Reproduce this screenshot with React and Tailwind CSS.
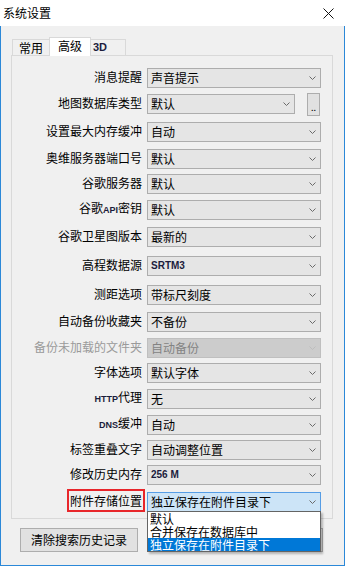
import React from 'react'

const Latin = ({ children }) => (
  <span className="font-['Liberation_Sans',sans-serif] text-[9px] font-bold text-[#1c1c3c]">{children}</span>
)

const rows = [
  { label: '消息提醒', value: '声音提示', gap: 'mt-0' },
  { label: '地图数据库类型', value: '默认', gap: 'mt-[6px]', browse: true },
  { label: '设置最大内存缓冲', value: '自动', gap: 'mt-[8px]' },
  { label: '奥维服务器端口号', value: '默认', gap: 'mt-[7px]' },
  { label: '谷歌服务器', value: '默认', gap: 'mt-[5px]' },
  { label: <>谷歌<Latin>API</Latin>密钥</>, value: '默认', gap: 'mt-[6px]' },
  { label: '谷歌卫星图版本', value: '最新的', gap: 'mt-[7px]' },
  { label: '高程数据源', value: 'SRTM3', latin: true, gap: 'mt-[9px]' },
  { label: '测距选项', value: '带标尺刻度', gap: 'mt-[9px]' },
  { label: '自动备份收藏夹', value: '不备份', gap: 'mt-[7px]' },
  { label: '备份未加载的文件夹', value: '自动备份', disabled: true, gap: 'mt-[6px]' },
  { label: '字体选项', value: '默认字体', gap: 'mt-[5px]' },
  { label: <><Latin>HTTP</Latin>代理</>, value: '无', gap: 'mt-[6px]' },
  { label: <><Latin>DNS</Latin>缓冲</>, value: '自动', gap: 'mt-[6px]' },
  { label: '标签重叠文字', value: '自动调整位置', gap: 'mt-[5px]' },
  { label: '修改历史内存', value: '256 M', latin: true, gap: 'mt-[5px]' },
  { label: '附件存储位置', value: '独立保存在附件目录下', focus: true, gap: 'mt-[7px]' },
  { label: '网址连接选项', value: '默认', gap: 'mt-[3px]' },
]

function Chevron({ color }) {
  return (
    <svg width="7" height="4" viewBox="0 0 7 4" className="shrink-0">
      <polyline points="0.5,0.5 3.5,3.5 6.5,0.5" fill="none" stroke={color} strokeWidth="1" />
    </svg>
  )
}

function Select({ row }) {
  let box = 'border-[#adadad] bg-[#e5e5e5] text-black'
  if (row.disabled) box = 'border-[#bfbfbf] bg-[#cccccc] text-[#838383]'
  if (row.focus) box = 'border-[#569de5] bg-[#cce4f7] text-black'
  const width = row.browse ? 'w-[148px]' : 'w-[174px]'
  return (
    <div className={`h-[20px] ${width} border ${box} flex items-center pl-[3px] pr-[4px]`}>
      <span className={row.latin
        ? "flex-1 font-['Liberation_Sans',sans-serif] text-[10px] font-bold text-[#1c1c3c] leading-[14px]"
        : 'flex-1 text-[12px] leading-[14px]'}>
        {row.value}
      </span>
      <Chevron color={row.disabled ? '#bdbdbd' : '#6a6a6a'} />
    </div>
  )
}

export default function App() {
  return (
    <div className="w-[345px] h-[566px] bg-white flex flex-col overflow-hidden relative font-['Noto_Sans_CJK_SC',sans-serif] text-black">
      <div className="h-[26px] flex items-center justify-between pl-[3px] pr-[11px] shrink-0">
        <span className="text-[12px] leading-[14px]">系统设置</span>
        <svg width="11" height="11" viewBox="0 0 11 11">
          <path d="M0.5 0.5 L10.5 10.5 M10.5 0.5 L0.5 10.5" stroke="#111" strokeWidth="1" fill="none" />
        </svg>
      </div>

      <div className="flex-1 bg-[#f0f0f0] border-x border-b border-[#2b88d8] pl-[10px] pr-[11px] pt-[11px]">
        <div className="h-[19px] -mb-px relative z-10 flex items-end pl-[1px]">
          <div className="h-[16px] mb-px w-[37px] border-l border-t border-[#d9d9d9] flex items-center justify-center text-[12px] leading-[12px] pt-[1px]">常用</div>
          <div className="h-[19px] w-[42px] border-x border-t border-[#d9d9d9] bg-white flex items-start justify-center text-[12px] leading-[12px] pt-[2px]">高级</div>
          <div className="h-[16px] mb-px w-[35px] border-r border-t border-[#d9d9d9] flex items-center pl-[2px] font-['Liberation_Sans',sans-serif] text-[11px] font-bold text-[#1c1c3c]">3D</div>
        </div>

        <div className="h-[464px] border border-[#d9d9d9] overflow-hidden pt-[12px]">
          {rows.map((row, i) => (
            <div key={i} className={`${row.gap} h-[20px] flex items-center`}>
              <div className={`w-[131px] text-right text-[12px] leading-[14px] pr-[1px] mr-[4px] -mt-[2px] ${row.disabled ? 'text-[#9a9a9a]' : ''}`}>
                <span className={row.focus ? 'outline-2 outline-[#e8262b] outline-offset-[1px]' : ''}>{row.label}</span>
              </div>
              <Select row={row} />
              {row.browse && (
                <div className="ml-[12px] h-[23px] w-[13px] border border-[#adadad] bg-[#e1e1e1] flex items-end justify-center text-[9px] leading-[12px] pb-[1px]">..</div>
              )}
            </div>
          ))}
        </div>

        <div className="mt-[9px] flex items-center">
          <button className="ml-[9px] h-[24px] w-[118px] border border-[#adadad] bg-[#e1e1e1] text-[12px] leading-[14px]">清除搜索历史记录</button>
          <button className="ml-[12px] h-[24px] w-[173px] border border-[#adadad] bg-[#e1e1e1]" aria-label="恢复默认设置"></button>
        </div>
      </div>

      <div className="absolute left-[147px] top-[511px] w-[174px] h-[41px] bg-white border border-[#646464] shadow-[2px_2px_2px_rgba(0,0,0,0.25)] flex flex-col text-[12px] leading-[13px]">
        <div className="h-[13px] pl-[2px]">默认</div>
        <div className="h-[13px] pl-[2px]">合并保存在数据库中</div>
        <div className="h-[13px] pl-[2px] bg-[#0078d7] text-white">独立保存在附件目录下</div>
      </div>
    </div>
  )
}
